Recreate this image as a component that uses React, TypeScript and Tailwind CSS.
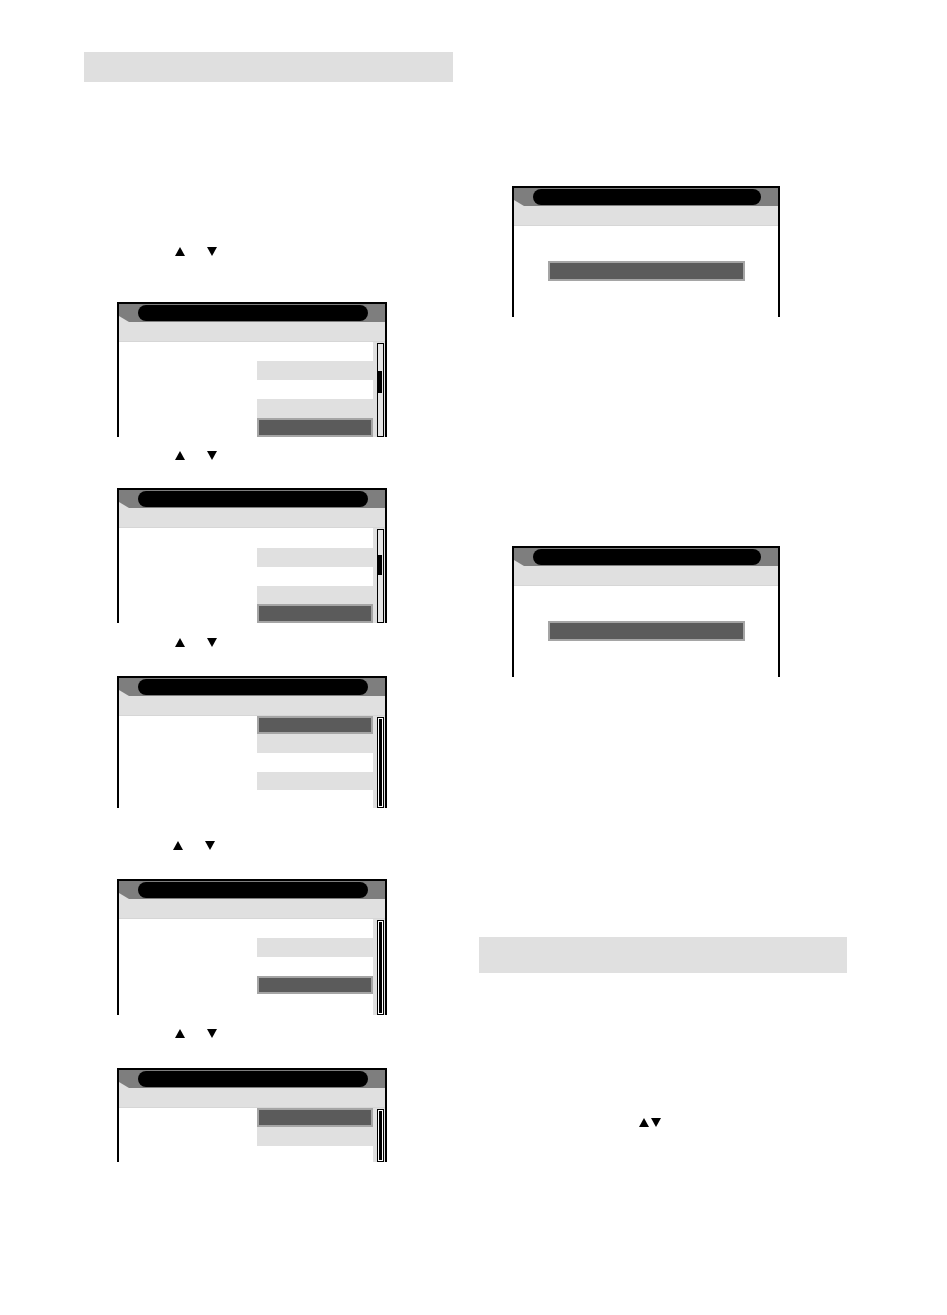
import React from 'react';

type Row = { kind: 'w' | 'g' | 'd'; h: number };

// 上下箭头，对应原图里的小三角
function Arrows({ gap = 22, tight = false }: { gap?: number; tight?: boolean }) {
  return (
    <div className="flex items-start" style={{ gap: tight ? 2 : gap }}>
      <svg width="10" height="9" viewBox="0 0 10 9">
        <polygon points="5,0 10,9 0,9" fill="#000" />
      </svg>
      <svg width="10" height="9" viewBox="0 0 10 9">
        <polygon points="0,0 10,0 5,9" fill="#000" />
      </svg>
    </div>
  );
}

function Header() {
  return (
    <>
      <div className="bg-[#e0e0e0]">
        <div className="h-[18px] bg-[#7e7e7e] pt-[1px] pl-[19px] pr-[17px] [clip-path:polygon(0_0,100%_0,100%_100%,10px_100%,0_12px)]">
          <div className="h-[16px] rounded-full bg-black" />
        </div>
      </div>
      <div className="h-[20px] bg-[#e0e0e0] border-b border-[#d6d6d6]" />
    </>
  );
}

// 左侧带列表和滚动条的屏幕
function ListScreen({ rows, thumb }: { rows: Row[]; thumb?: { top: number; h: number } }) {
  const total = rows.reduce((s, r) => s + r.h, 0);
  return (
    <div className="ml-[33px] w-[270px] border-x-2 border-t-2 border-black bg-white">
      <Header />
      <div className="flex" style={{ height: total }}>
        <div className="w-[138px] bg-white" />
        <div className="flex w-[116px] flex-col">
          {rows.map((r, i) =>
            r.kind === 'd' ? (
              <div key={i} className="border-2 border-[#a5a5a5] bg-[#5b5b5b]" style={{ height: r.h }} />
            ) : (
              <div key={i} className={r.kind === 'g' ? 'bg-[#e0e0e0]' : 'bg-white'} style={{ height: r.h }} />
            )
          )}
        </div>
        <div className="flex flex-1 bg-[#e0e0e0] pl-[4px] pr-[1px] pt-[1px]">
          {thumb ? (
            <div className="flex w-[7px] flex-col border border-black bg-[#e6e6e6]">
              <div style={{ height: thumb.top }} />
              <div className="w-[4px] bg-black" style={{ height: thumb.h }} />
            </div>
          ) : (
            <div className="flex w-[7px] flex-col border border-black bg-white p-[1px]">
              <div className="flex-1 bg-black" />
            </div>
          )}
        </div>
      </div>
    </div>
  );
}

// 右侧只有一条选中栏的屏幕
function BarScreen() {
  return (
    <div className="ml-[33px] w-[268px] border-x-2 border-t-2 border-black bg-white">
      <Header />
      <div className="h-[91px] bg-white pl-[34px] pt-[35px]">
        <div className="h-[20px] w-[197px] border-2 border-[#a5a5a5] bg-[#5b5b5b]" />
      </div>
    </div>
  );
}

export default function App() {
  return (
    <div className="flex h-[1315px] w-[947px] overflow-hidden bg-white font-['Liberation_Sans',sans-serif]">
      {/* 左栏 */}
      <div className="ml-[84px] flex w-[370px] flex-col pt-[52px]">
        <div className="h-[30px] w-[369px] bg-[#dfdfdf]" />

        <div className="ml-[91px] mt-[165px]"><Arrows /></div>
        <div className="mt-[46px]">
          <ListScreen
            rows={[{ kind: 'w', h: 19 }, { kind: 'g', h: 19 }, { kind: 'w', h: 19 }, { kind: 'g', h: 19 }, { kind: 'd', h: 19 }]}
            thumb={{ top: 27, h: 22 }}
          />
        </div>

        <div className="ml-[91px] mt-[14px]"><Arrows /></div>
        <div className="mt-[28px]">
          <ListScreen
            rows={[{ kind: 'w', h: 20 }, { kind: 'g', h: 19 }, { kind: 'w', h: 19 }, { kind: 'g', h: 18 }, { kind: 'd', h: 19 }]}
            thumb={{ top: 25, h: 20 }}
          />
        </div>

        <div className="ml-[91px] mt-[15px]"><Arrows /></div>
        <div className="mt-[29px]">
          <ListScreen
            rows={[{ kind: 'd', h: 18 }, { kind: 'g', h: 19 }, { kind: 'w', h: 19 }, { kind: 'g', h: 18 }, { kind: 'w', h: 18 }]}
          />
        </div>

        <div className="ml-[89px] mt-[33px]"><Arrows /></div>
        <div className="mt-[29px]">
          <ListScreen
            rows={[{ kind: 'w', h: 19 }, { kind: 'g', h: 19 }, { kind: 'w', h: 19 }, { kind: 'd', h: 18 }, { kind: 'w', h: 21 }]}
          />
        </div>

        <div className="ml-[91px] mt-[14px]"><Arrows /></div>
        <div className="mt-[30px]">
          <ListScreen rows={[{ kind: 'd', h: 19 }, { kind: 'g', h: 19 }, { kind: 'w', h: 16 }]} />
        </div>
      </div>

      {/* 右栏 */}
      <div className="ml-[25px] flex w-[368px] flex-col pt-[186px]">
        <BarScreen />
        <div className="mt-[229px]">
          <BarScreen />
        </div>
        <div className="mt-[260px] h-[36px] w-[368px] bg-[#e0e0e0]" />
        <div className="ml-[160px] mt-[145px]"><Arrows tight /></div>
      </div>
    </div>
  );
}
